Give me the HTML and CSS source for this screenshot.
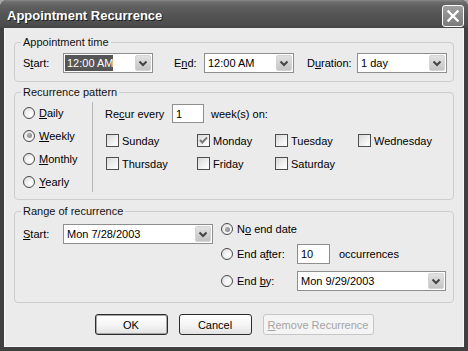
FILE: index.html
```html
<!DOCTYPE html>
<html>
<head>
<meta charset="utf-8">
<link rel="stylesheet" href="styles.css">
</head>
<body>
<div class="win">
  <div class="titlebar">
    <span class="title">Appointment Recurrence</span>
    <div class="close">
      <svg width="14" height="14" viewBox="0 0 14 14"><path d="M2.5 2.5 L11.5 11.5 M11.5 2.5 L2.5 11.5" stroke="#fff" stroke-width="2.4" stroke-linecap="square"/></svg>
    </div>
  </div>
  <div class="body">
    <fieldset class="group g1">
      <legend>Appointment time</legend>
      <div class="row">
        <span class="lbl w40">S<u>t</u>art:</span>
        <div class="combo w90"><span class="val sel">12:00 AM</span><span class="drop"><svg width="14" height="14" viewBox="0 0 14 14"><path d="M3.5 5.5 L7 9 L10.5 5.5" fill="none" stroke="#444" stroke-width="2"/></svg></span></div>
        <span class="lbl w30 ml21">E<u>n</u>d:</span>
        <div class="combo w90"><span class="val">12:00 AM</span><span class="drop"><svg width="14" height="14" viewBox="0 0 14 14"><path d="M3.5 5.5 L7 9 L10.5 5.5" fill="none" stroke="#444" stroke-width="2"/></svg></span></div>
        <span class="lbl w50 ml13">D<u>u</u>ration:</span>
        <div class="combo w90"><span class="val">1 day</span><span class="drop"><svg width="14" height="14" viewBox="0 0 14 14"><path d="M3.5 5.5 L7 9 L10.5 5.5" fill="none" stroke="#444" stroke-width="2"/></svg></span></div>
      </div>
    </fieldset>

    <fieldset class="group g2">
      <legend>Recurrence pattern</legend>
      <div class="pattern">
        <div class="radiocol">
          <div class="ropt"><span class="radio"></span><span><u>D</u>aily</span></div>
          <div class="ropt"><span class="radio on"></span><span><u>W</u>eekly</span></div>
          <div class="ropt"><span class="radio"></span><span><u>M</u>onthly</span></div>
          <div class="ropt"><span class="radio"></span><span><u>Y</u>early</span></div>
        </div>
        <div class="sep"></div>
        <div class="rightcol">
          <div class="recur">
            <span class="lbl w67">Re<u>c</u>ur every</span>
            <div class="input w32">1</div>
            <span class="ml7">week(s) on:</span>
          </div>
          <div class="days">
            <div class="day"><span class="check"></span><span>Sunday</span></div>
            <div class="day"><span class="check"><svg width="11" height="11" viewBox="0 0 11 11"><path d="M2 5 L4.3 7.5 L9 2.5" fill="none" stroke="#7a7a7a" stroke-width="2"/></svg></span><span>Monday</span></div>
            <div class="day"><span class="check"></span><span>Tuesday</span></div>
            <div class="day"><span class="check"></span><span>Wednesday</span></div>
            <div class="day"><span class="check"></span><span>Thursday</span></div>
            <div class="day"><span class="check"></span><span>Friday</span></div>
            <div class="day"><span class="check"></span><span>Saturday</span></div>
          </div>
        </div>
      </div>
    </fieldset>

    <fieldset class="group g3">
      <legend>Range of recurrence</legend>
      <div class="range">
        <div class="rangeleft">
          <span class="lbl w40"><u>S</u>tart:</span>
          <div class="combo w150"><span class="val">Mon 7/28/2003</span><span class="drop"><svg width="14" height="14" viewBox="0 0 14 14"><path d="M3.5 5.5 L7 9 L10.5 5.5" fill="none" stroke="#444" stroke-width="2"/></svg></span></div>
        </div>
        <div class="rangeright">
          <div class="rrow r1"><span class="radio on"></span><span>N<u>o</u> end date</span></div>
          <div class="rrow r2"><span class="radio"></span><span class="lbl w60">End a<u>f</u>ter:</span><div class="input w33">10</div><span class="ml9">occurrences</span></div>
          <div class="rrow r3"><span class="radio"></span><span class="lbl w60">End <u>b</u>y:</span><div class="combo w149"><span class="val">Mon 9/29/2003</span><span class="drop"><svg width="14" height="14" viewBox="0 0 14 14"><path d="M3.5 5.5 L7 9 L10.5 5.5" fill="none" stroke="#444" stroke-width="2"/></svg></span></div></div>
        </div>
      </div>
    </fieldset>

    <div class="buttons">
      <div class="btn def">OK</div>
      <div class="btn">Cancel</div>
      <div class="btn dis"><span><u>R</u>emove Recurrence</span></div>
    </div>
  </div>
</div>
</body>
</html>
```

FILE: styles.css
```css
* { box-sizing: border-box; }
html, body { margin: 0; padding: 0; }
body {
  background: #a8a8a8;
  font-family: "Liberation Sans", Arial, sans-serif;
  font-size: 11px;
  color: #000;
}
u { text-decoration-thickness: 1px; text-underline-offset: 1px; }

.win {
  width: 468px;
  height: 351px;
  display: flex;
  flex-direction: column;
  background: #404040;
  border-radius: 7px 7px 0 0;
  overflow: hidden;
}
.titlebar {
  height: 28px;
  flex: none;
  display: flex;
  align-items: center;
  justify-content: space-between;
  padding: 3px 4px 0 7px;
  background: linear-gradient(#8a8a8a 0, #6e6e6e 2px, #606060 6px, #555 14px, #4d4d4d 24px, #454545 28px);
}
.title {
  font-weight: bold;
  font-size: 13px;
  color: #fff;
  text-shadow: 1px 1px 0 #1c1c1c;
}
.close {
  width: 22px;
  height: 22px;
  border: 1px solid #fff;
  border-radius: 3px;
  background: linear-gradient(#a0a0a0, #7a7a7a);
  display: flex;
  align-items: center;
  justify-content: center;
}

.body {
  flex: 1;
  margin: 0 4px 4px;
  background: #ebebeb;
  border: 1px solid #f8f8f8;
  border-top: 0;
  padding: 0 9px;
  display: flex;
  flex-direction: column;
}

.group {
  margin: 0;
  padding: 0 6px 0 8px;
  border: 1px solid #cdcdcd;
  border-radius: 4px;
  min-width: 0;
}
.group legend {
  padding: 0 2px;
  margin-left: -2px;
  line-height: 13px;
  color: #111;
}
.g1 { margin-top: 8px; padding-top: 4px; padding-bottom: 8px; }
.g2 { margin-top: 4px; padding-top: 2px; padding-bottom: 6px; }
.g3 { margin-top: 5px; padding-top: 0; padding-bottom: 11px; }

.row { display: flex; align-items: center; }
.lbl { flex: none; }
.w30 { width: 30px; }
.w40 { width: 40px; }
.w50 { width: 50px; }
.w60 { width: 60px; }
.w67 { width: 67px; }
.ml7 { margin-left: 7px; }
.ml9 { margin-left: 9px; }
.ml13 { margin-left: 13px; }
.ml21 { margin-left: 21px; }

.combo {
  flex: none;
  height: 20px;
  border: 1px solid #8e8e8e;
  background: #fff;
  padding: 1px;
  display: flex;
  align-items: center;
  justify-content: space-between;
}
.w90 { width: 90px; }
.w149 { width: 149px; }
.w150 { width: 150px; }
.val { padding-left: 2px; white-space: nowrap; }
.val.sel {
  background: #565656;
  color: #fff;
  line-height: 16px;
  padding: 0 0 0 2px;
}
.drop {
  width: 16px;
  height: 16px;
  border-radius: 2px;
  border: 1px solid #d4d4d4;
  background: linear-gradient(#e2e2e2, #c4c4c4);
  display: flex;
  align-items: center;
  justify-content: center;
}

.input {
  flex: none;
  height: 19px;
  border: 1px solid #8e8e8e;
  background: #fff;
  padding-left: 3px;
  display: flex;
  align-items: center;
}
.w32 { width: 32px; }
.w33 { width: 33px; height: 20px; }

.pattern { display: flex; }
.radiocol { width: 69px; display: flex; flex-direction: column; }
.ropt { height: 23px; display: flex; align-items: center; gap: 4px; }
.radio {
  flex: none;
  width: 12px;
  height: 12px;
  border-radius: 50%;
  border: 1px solid #4a4a4a;
  background: radial-gradient(circle at 65% 65%, #fff 0, #f2f2f2 40%, #d6d6d6 100%);
  display: flex;
  align-items: center;
  justify-content: center;
}
.radio.on::after {
  content: "";
  width: 5px;
  height: 5px;
  border-radius: 50%;
  background: radial-gradient(circle at 40% 40%, #b0b0b0, #7c7c7c);
}
.sep { width: 1px; margin: 1px 0; background: #b6b6b6; }
.rightcol { flex: 1; padding-left: 12px; }
.recur { display: flex; align-items: center; height: 19px; margin-top: 3px; }
.days {
  display: grid;
  grid-template-columns: 91px 78px 83px auto;
  grid-auto-rows: 23px;
  margin-top: 6px;
}
.day { display: flex; align-items: center; gap: 3px; padding-left: 1px; }
.check {
  flex: none;
  width: 13px;
  height: 13px;
  border: 1px solid #4e4e4e;
  background: linear-gradient(135deg, #d8d8d8, #f6f6f6 70%, #fff);
  display: flex;
  align-items: center;
  justify-content: center;
}

.range { display: flex; }
.rangeleft { display: flex; align-items: center; padding-top: 6px; align-self: flex-start; }
.rangeright { display: flex; flex-direction: column; margin-left: 8px; }
.rrow { height: 20px; display: flex; align-items: center; }
.rrow .radio { margin-right: 4px; }
.r1 { margin-top: 1px; }
.r2 { margin-top: 5px; }
.r3 { margin-top: 7px; }

.buttons {
  display: flex;
  justify-content: center;
  gap: 11px;
  margin-top: 11px;
}
.btn {
  width: 73px;
  height: 21px;
  border: 1px solid #2c2c2c;
  border-radius: 3px;
  background: linear-gradient(#fff, #f4f4f4 55%, #e2e2e2);
  display: flex;
  align-items: center;
  justify-content: center;
}
.btn.def { box-shadow: inset 0 0 0 1px #a6a6a6; }
.btn.dis {
  width: 111px;
  border-color: #c6c6c6;
  color: #a4a4a4;
  background: #f4f4f4;
}
```
